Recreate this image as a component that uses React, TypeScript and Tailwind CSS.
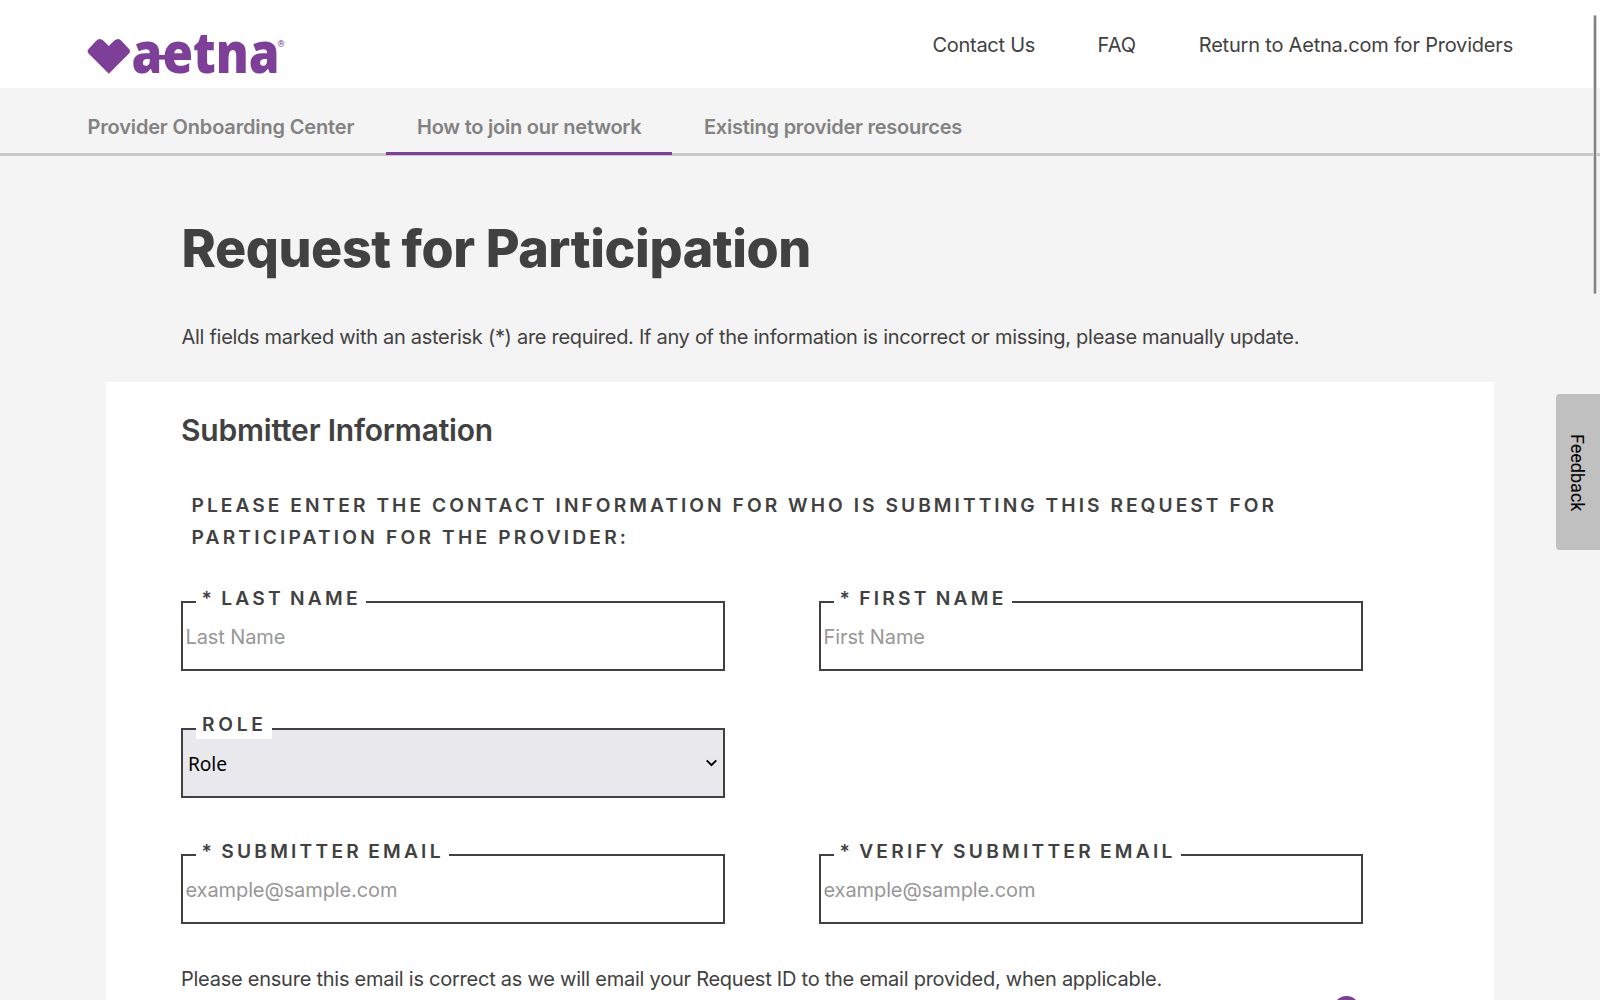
import React from "react";

function Logo() {
  return (
    <svg className="overflow-visible" width="200" height="48" viewBox="86 30 200 48" role="img" aria-label="aetna">
      <path
        d="M108.8 73.8 L88.6 53.6 Q86.6 51.4 88.6 49.1 L96 41 Q99.5 37.2 103.2 40.6 L108.8 46 L114.4 40.6 Q118.1 37.2 121.6 41 L129 49.1 Q131 51.4 129 53.6 Z"
        fill="#7d3f98"
      />
      <text
        x="131.6"
        y="73.2"
        textLength="148"
        lengthAdjust="spacingAndGlyphs"
        fontFamily='"Open Sans", sans-serif'
        fontWeight="800"
        fontSize="57"
        fill="#7d3f98"
      >
        aetna
      </text>
      <rect x="156" y="55" width="16" height="4.6" fill="#7d3f98" />
      <text x="277.6" y="47" fontFamily="Roboto, sans-serif" fontSize="9" fill="#7d3f98">
        ®
      </text>
    </svg>
  );
}

type FieldProps = { label: string; placeholder: string };

function Field({ label, placeholder }: FieldProps) {
  return (
    <div className="relative h-[70px] border-2 border-[#414141]">
      <label className="absolute -top-[21px] left-[12.5px] h-[32px] bg-white pr-[5px] pl-[6px] text-[19.2px] leading-[32px] font-semibold tracking-[3.24px] whitespace-pre [word-spacing:-2px]">
        {label}
      </label>
      <div className="flex h-full items-center pt-[2px] pl-[2.5px] text-[20px] leading-[32px] tracking-[-0.1px] text-[#979797]">
        {placeholder}
      </div>
    </div>
  );
}

export default function App() {
  return (
    <div className="relative h-[1000px] w-[1600px] overflow-hidden bg-[#f4f4f4] font-[Inter,sans-serif] text-[20px] leading-[32px] text-[#414141]">
      <header className="flex h-[88px] items-start justify-between bg-white pr-[87px] pl-[86px]">
        <div className="pt-[30px]">
          <Logo />
        </div>
        <nav className="flex gap-[62.5px] pt-[29px] whitespace-nowrap">
          <a className="tracking-[-0.27px]">Contact Us</a>
          <a className="tracking-[0.1px]">FAQ</a>
          <a className="tracking-[-0.2px]">Return to Aetna.com for Providers</a>
        </nav>
      </header>

      <nav className="flex h-[68px] border-b-[3px] border-[#c8c8c8] pl-[56px] font-semibold whitespace-nowrap text-[#828282]">
        <a className="h-[68px] w-[330px] pt-[23px] pl-[31.5px] tracking-[-0.16px]">Provider Onboarding Center</a>
        <a className="relative h-[67px] w-[286px] border-b-[3px] border-[#7d3f98] pt-[23px] pl-[31px] tracking-[-0.23px]">
          How to join our network
        </a>
        <a className="pt-[23px] pl-[32px] tracking-[-0.24px]">Existing provider resources</a>
      </nav>

      <div className="pl-[181.5px]">
        <h1 className="pt-[61px] text-[52px] leading-[64px] font-extrabold tracking-[-0.43px]">
          Request for Participation
        </h1>
        <p className="pt-[40px] tracking-[-0.288px] whitespace-nowrap">
          All fields marked with an asterisk (*) are required. If any of the information is incorrect or missing, please
          manually update.
        </p>
      </div>

      <main className="mt-[29px] ml-[106px] h-[700px] w-[1388px] bg-white px-[75px] pt-[28px]">
        <h2 className="text-[30px] leading-[40px] font-semibold tracking-[-0.19px]">Submitter Information</h2>
        <p className="mt-[39px] pl-[10.5px] text-[19.2px] font-semibold whitespace-nowrap">
          <span className="block tracking-[3.04px]">
            PLEASE ENTER THE CONTACT INFORMATION FOR WHO IS SUBMITTING THIS REQUEST FOR
          </span>
          <span className="block tracking-[3.18px]">PARTICIPATION FOR THE PROVIDER:</span>
        </p>

        <div className="mt-[48px] grid grid-cols-[544px_544px] gap-x-[94px]">
          <Field label="* LAST NAME" placeholder="Last Name" />
          <Field label="* FIRST NAME" placeholder="First Name" />
          <div className="relative mt-[57px] h-[70px] border-2 border-[#414141] bg-[#e9e8ed]">
            <label className="absolute -top-[22px] left-[13px] h-[31px] w-[76px] bg-white pl-[6px] text-[19.2px] leading-[32px] font-semibold tracking-[3.7px]">
              ROLE
            </label>
            <div className="flex h-full items-center justify-between pr-[5px] pl-[5px] font-['Noto_Sans',sans-serif] text-[19.2px] tracking-[-0.1px] text-black">
              <span className="pt-[2px]">Role</span>
              <svg width="13" height="9" viewBox="0 0 13 9" fill="none">
                <path d="M1.7 1.3 L6.5 6.1 L11.3 1.3" stroke="black" strokeWidth="1.9" />
              </svg>
            </div>
          </div>
          <div />
          <div className="mt-[56px]">
            <Field label="* SUBMITTER EMAIL" placeholder="example@sample.com" />
          </div>
          <div className="mt-[56px]">
            <Field label="* VERIFY SUBMITTER EMAIL" placeholder="example@sample.com" />
          </div>
        </div>

        <p className="mt-[39px] tracking-[-0.248px] whitespace-nowrap">
          Please ensure this email is correct as we will email your Request ID to the email provided, when applicable.
        </p>
      </main>

      <div className="absolute top-[996px] left-[1333px] h-[27px] w-[27px] rounded-full bg-[#7d3f98]" />
      <div className="absolute top-[394px] left-[1556px] flex h-[156px] w-[48px] justify-center rounded-[4px] bg-[#c0c0c0] pt-px pr-[5px] text-center font-[Roboto,sans-serif] text-[18px] leading-[44px] text-black [writing-mode:vertical-rl]">
        Feedback
      </div>
      <div className="absolute top-[15px] left-[1593px] h-[279px] w-[4px] rounded-full border-x border-[#d4d4d4] bg-[#828282]" />
    </div>
  );
}
